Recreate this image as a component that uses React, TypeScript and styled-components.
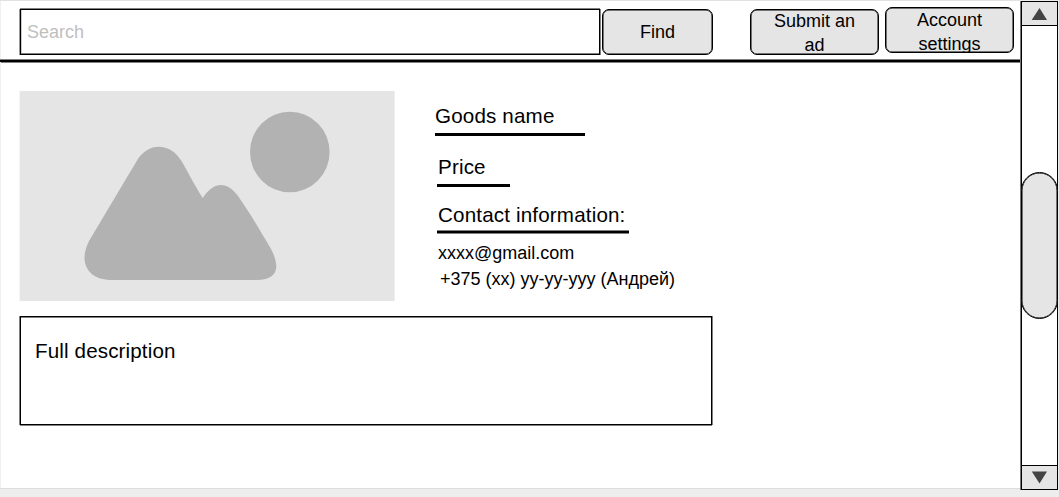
import React from 'react';
import styled, { createGlobalStyle } from 'styled-components';

const GlobalStyle = createGlobalStyle`
  * { box-sizing: border-box; }
  body { margin: 0; background: #ededed; overflow: hidden; }
`;

const Window = styled.div`
  display: flex;
  width: 1059px;
  height: 497px;
  font-family: 'Liberation Sans', Arial, sans-serif;
  color: #000;
`;

const Page = styled.div`
  flex: none;
  width: 1020px;
  height: 489px;
  background: #fff;
  border-top: 1px solid #e1e1e1;
  border-bottom: 1px solid #dcdcdc;
`;

const Header = styled.header`
  display: flex;
  align-items: flex-start;
  height: 61px;
  padding: 8px 0 0 20px;
  border-bottom: 2px solid #000;
  box-shadow: 0 1px 0 #808080, inset 0 -1px 0 #808080, inset 1px 0 0 #f0f0f0;
`;

const SearchInput = styled.input`
  width: 580px;
  height: 46px;
  margin: 0;
  padding: 0 0 0 6px;
  border: 1px solid #000;
  border-radius: 0;
  outline: none;
  background: #fff;
  box-shadow: 0 -1px 0 #808080, -1px 0 0 #999, 1px 0 0 #808080, inset 0 -1px 0 #808080, inset 1px 0 0 #ccc;
  font: 18px 'Liberation Sans', Arial, sans-serif;
  &::placeholder { color: #bfbfbf; opacity: 1; }
`;

const Button = styled.button<{ $width: number; $gap: number; $raise?: number; $drop?: number }>`
  flex: none;
  display: flex;
  align-items: center;
  justify-content: center;
  width: ${(p) => p.$width}px;
  height: 46px;
  margin: ${(p) => -(p.$raise ?? 0)}px 0 0 ${(p) => p.$gap}px;
  padding: ${(p) => p.$drop ?? 0}px 20px 0;
  overflow: hidden;
  border: 1px solid #000;
  border-radius: 7px;
  background: #e5e5e5;
  box-shadow: inset 0 0 0 0.5px #000;
  color: #000;
  font: 18px/24px 'Liberation Sans', Arial, sans-serif;
`;

const Content = styled.main`
  height: 426px;
  padding: 29px 0 0 20px;
  box-shadow: inset 1px 0 0 #f0f0f0;
`;

const Product = styled.section`
  display: flex;
  height: 225px;
`;

const Photo = styled.svg`
  flex: none;
  display: block;
  width: 374px;
  height: 210px;
  margin-right: 1px;
  background: #e5e5e5;
  box-shadow: -1px 0 0 #f5f5f5, 1px 0 0 #f0f0f0;
`;

const Details = styled.div`
  display: flex;
  flex-direction: column;
  align-items: flex-start;
  padding-left: 40px;
`;

const Field = styled.div<{ $width: number; $top: number; $left?: number; $indent?: number; $height: number; $soft?: boolean }>`
  width: ${(p) => p.$width}px;
  height: ${(p) => p.$height}px;
  margin: ${(p) => p.$top}px 0 0 ${(p) => p.$left ?? 0}px;
  padding-left: ${(p) => p.$indent ?? 0}px;
  border-bottom: ${(p) => (p.$soft ? 2 : 3)}px solid #000;
  box-shadow: ${(p) => (p.$soft ? '0 1px 0 #808080, inset 0 -1px 0 #808080' : 'none')};
  font-size: 20.6px;
  letter-spacing: 0.16px;
  line-height: 24px;
  white-space: nowrap;
`;

const Contact = styled.div<{ $left: number; $top?: number }>`
  margin: ${(p) => p.$top ?? 0}px 0 0 ${(p) => p.$left}px;
  font-size: 18px;
  line-height: 26px;
  white-space: nowrap;
`;

const Description = styled.section`
  width: 692px;
  height: 109px;
  padding: 21px 14px;
  border: 1px solid #000;
  box-shadow: -1px 0 0 #808080, 1px 0 0 #808080, 0 1px 0 #808080, inset 0 1px 0 #808080;
  font-size: 20.6px;
  letter-spacing: 0.13px;
  line-height: 26px;
`;

const Scrollbar = styled.aside`
  flex: none;
  display: flex;
  flex-direction: column;
  width: 37px;
  height: 489px;
  margin: 1px 0 0 1px;
  border: 1px solid #000;
  background: #fff;
  box-shadow: -1px 0 0 #777;
`;

const Arrow = styled.div<{ $edge: 'top' | 'bottom' }>`
  display: flex;
  flex: none;
  height: 24px;
  background: #e5e5e5;
  border-${(p) => (p.$edge === 'top' ? 'bottom' : 'top')}: 1px solid #000;
`;

const Track = styled.div`
  flex: 1;
  padding-top: 146px;
`;

const Thumb = styled.div`
  width: 37px;
  height: 147px;
  margin-left: -1px;
  border: 1px solid #000;
  border-radius: 19px;
  background: #e5e5e5;
  box-shadow: inset 0 0 0 0.5px #000;
`;

export default function App() {
  return (
    <>
      <GlobalStyle />
      <Window>
        <Page>
          <Header>
            <SearchInput placeholder="Search" />
            <Button $width={111} $gap={2}>Find</Button>
            <Button $width={129} $gap={37} $drop={2}>Submit an ad</Button>
            <Button $width={129} $gap={6} $raise={2} $drop={4}>Account settings</Button>
          </Header>
          <Content>
            <Product>
              <Photo viewBox="0 0 374 210">
                <g fill="#b2b2b2">
                  <ellipse cx="269.8" cy="61" rx="39.8" ry="40.2" />
                  <path d="M117 69.5C128 51 150 51 161.500 70C168 81 172 90 182.700 107C194 90 207 90 218 105C228 119 240 139 251 158C261 177 257 189 237 189H92C68 189 58 172 69 150Z" />
                </g>
              </Photo>
              <Details>
                <Field $width={150} $height={32} $top={13}>Goods name</Field>
                <Field $width={73} $height={32} $top={19} $left={2} $indent={1}>Price</Field>
                <Field $width={192} $height={30} $top={16} $left={2} $indent={1} $soft>Contact information:</Field>
                <Contact $left={3} $top={7}>xxxx@gmail.com</Contact>
                <Contact $left={5}>+375 (xx) yy-yy-yyy (Андрей)</Contact>
              </Details>
            </Product>
            <Description>Full description</Description>
          </Content>
        </Page>
        <Scrollbar>
          <Arrow $edge="top">
            <svg width="35" height="23"><path d="M9.700 18L17.500 6L25 18Z" fill="#444" /></svg>
          </Arrow>
          <Track><Thumb /></Track>
          <Arrow $edge="bottom">
            <svg width="35" height="23"><path d="M9.800 5.500H25L17.500 17.500Z" fill="#444" /></svg>
          </Arrow>
        </Scrollbar>
      </Window>
    </>
  );
}
